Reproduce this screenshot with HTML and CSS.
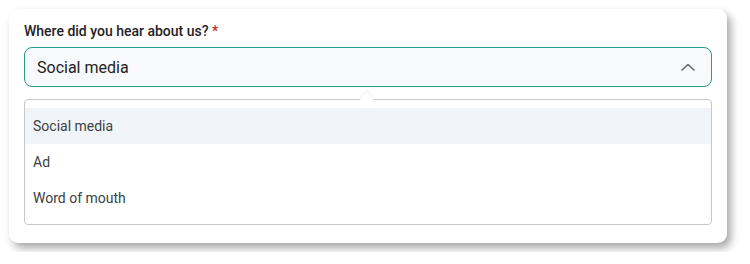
FILE: index.html
```html
<!DOCTYPE html>
<html lang="en">

<head>
  <meta charset="UTF-8">
  <meta name="viewport" content="width=device-width, initial-scale=1.0">
  <title>Where did you hear about us?</title>
  <link rel="stylesheet" href="styles.css">
</head>

<body>
  <div class="card">
    <label class="field-label" for="source">Where did you hear about us? <span class="required">*</span></label>
    <div class="select-box" id="source">
      <span class="select-value">Social media</span>
      <svg class="chevron" width="14" height="8" viewBox="0 0 14 8">
        <path d="M1 7 L7 1.5 L13 7" fill="none" stroke="#5f6368" stroke-width="1.6" stroke-linecap="round" stroke-linejoin="round" />
      </svg>
    </div>
    <div class="dropdown">
      <div class="option active">Social media</div>
      <div class="option">Ad</div>
      <div class="option">Word of mouth</div>
    </div>
  </div>
</body>

</html>
```

FILE: styles.css
```css
body {
  font-family: Roboto, "Noto Sans", Arial, sans-serif;
  background-color: #fff;
  margin: 0;
  padding: 9px;
}

.card {
  width: 718px;
  height: 234px;
  box-sizing: border-box;
  background-color: #fff;
  border-radius: 9px;
  box-shadow: 4px 5px 9px rgba(0, 0, 0, 0.35);
  padding: 13px 15px 0 15px;
}

.field-label {
  display: block;
  font-size: 14px;
  font-weight: 500;
  line-height: 18px;
  color: #1f2328;
  margin-bottom: 7px;
}

.required {
  color: #c62828;
}

.select-box {
  height: 40px;
  box-sizing: border-box;
  border: 1px solid #2a9d8f;
  border-radius: 8px;
  background-color: #f8f9fa;
  display: flex;
  align-items: center;
  justify-content: space-between;
  padding: 0 16px 0 12px;
}

.select-value {
  font-size: 16px;
  color: #222;
}

.chevron {
  display: block;
}

.dropdown {
  position: relative;
  margin-top: 12px;
  border: 1px solid #c8c8cc;
  border-radius: 4px;
  background-color: #fff;
  padding: 8px 0 8px 0;
}

/* kleiner Pfeil oben */
.dropdown::before {
  content: "";
  position: absolute;
  top: -6px;
  left: 50%;
  margin-left: -6px;
  width: 10px;
  height: 10px;
  background-color: #fff;
  transform: rotate(45deg);
  box-shadow: -1px -1px 2px rgba(0, 0, 0, 0.06);
}

.option {
  position: relative;
  height: 36px;
  line-height: 36px;
  padding-left: 8px;
  font-size: 14px;
  color: #3c4043;
}

.option.active {
  background-color: #f1f5f9;
}
```
